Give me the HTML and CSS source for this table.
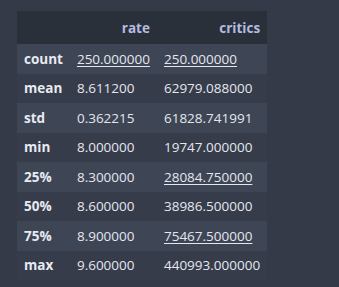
FILE: index.html
```html
<!DOCTYPE html>
<html>
<head>
<meta charset="utf-8">
<link rel="stylesheet" href="styles.css">
</head>
<body>
<table class="df">
  <thead>
    <tr class="head"><th class="idx"></th><th>rate</th><th>critics</th></tr>
  </thead>
  <tbody>
    <tr><th class="idx">count</th><td><span class="u">250.000000</span></td><td><span class="u">250.000000</span></td></tr>
    <tr><th class="idx">mean</th><td>8.611200</td><td>62979.088000</td></tr>
    <tr><th class="idx">std</th><td>0.362215</td><td>61828.741991</td></tr>
    <tr><th class="idx">min</th><td>8.000000</td><td>19747.000000</td></tr>
    <tr><th class="idx">25%</th><td>8.300000</td><td><span class="u">28084.750000</span></td></tr>
    <tr><th class="idx">50%</th><td>8.600000</td><td>38986.500000</td></tr>
    <tr><th class="idx">75%</th><td>8.900000</td><td><span class="u">75467.500000</span></td></tr>
    <tr><th class="idx">max</th><td>9.600000</td><td>440993.000000</td></tr>
  </tbody>
</table>
</body>
</html>
```
FILE: styles.css
```css
html, body {
  margin: 0;
  background: #343a48;
}
body {
  padding: 11px 0 0 17px;
  font-family: "Open Sans", "Noto Sans", sans-serif;
  font-size: 13.5px;
  color: #e4e7ef;
}
.df {
  border-collapse: collapse;
  border-spacing: 0;
}
.df th, .df td {
  padding: 0 7px;
  white-space: nowrap;
}
.head {
  background: #293039;
  height: 33px;
}
.head th {
  text-align: right;
  font-weight: 700;
  color: #b6bbe0;
}
.df tbody tr {
  height: 29.5px;
}
.df tbody tr:nth-child(odd) {
  background: #3e4554;
}
.df tbody tr:nth-child(even) {
  background: #363c4a;
}
.df tbody th.idx {
  text-align: left;
  font-weight: 700;
  color: #e8eaf2;
}
.df td {
  text-align: left;
}
.u {
  text-decoration: underline;
  text-underline-offset: 2px;
}
```
